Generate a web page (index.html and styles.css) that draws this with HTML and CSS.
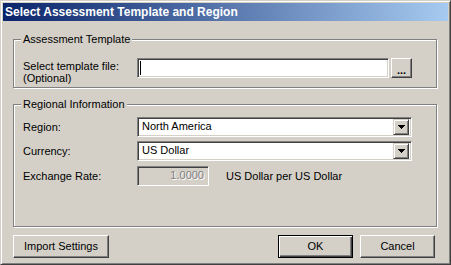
FILE: index.html
```html
<!DOCTYPE html>
<html>
<head>
<meta charset="utf-8">
<link rel="stylesheet" href="styles.css">
</head>
<body>
  <div class="window">
    <div class="titlebar">Select Assessment Template and Region</div>
    <div class="client">

      <div class="group group-template">
        <div class="group-title">Assessment Template</div>
        <div class="row row-file">
          <div class="label label-two">Select template file:<br>(Optional)</div>
          <div class="field field-file"><span class="caret"></span></div>
          <button class="btn btn-browse">...</button>
        </div>
      </div>

      <div class="group group-region">
        <div class="group-title">Regional Information</div>
        <div class="row row-region">
          <div class="label">Region:</div>
          <div class="field combo">
            <span class="combo-text">North America</span>
            <span class="combo-arrow"><svg width="7" height="4" viewBox="0 0 7 4"><path d="M0 0h7v1H0zM1 1h5v1H1zM2 2h3v1H2zM3 3h1v1H3z" fill="#000"/></svg></span>
          </div>
        </div>
        <div class="row row-currency">
          <div class="label">Currency:</div>
          <div class="field combo">
            <span class="combo-text">US Dollar</span>
            <span class="combo-arrow"><svg width="7" height="4" viewBox="0 0 7 4"><path d="M0 0h7v1H0zM1 1h5v1H1zM2 2h3v1H2zM3 3h1v1H3z" fill="#000"/></svg></span>
          </div>
        </div>
        <div class="row row-rate">
          <div class="label">Exchange Rate:</div>
          <div class="field field-rate">1.0000</div>
          <div class="rate-unit">US Dollar per US Dollar</div>
        </div>
      </div>

      <div class="footer">
        <button class="btn btn-import">Import Settings</button>
        <div class="footer-right">
          <button class="btn btn-default">OK</button>
          <button class="btn btn-cancel">Cancel</button>
        </div>
      </div>

    </div>
  </div>
</body>
</html>
```

FILE: styles.css
```css
html, body {
  margin: 0;
  padding: 0;
  background: #d4d0c8;
}

body {
  font-family: "Liberation Sans", Arial, sans-serif;
  font-size: 11px;
  line-height: 13px;
  color: #000;
}

/* window frame */
.window {
  width: 451px;
  height: 265px;
  box-sizing: border-box;
  border: 1px solid;
  border-color: #d4d0c8 #404040 #404040 #d4d0c8;
  box-shadow: inset 1px 1px 0 #fff, inset -1px -1px 0 #808080;
  padding: 2px;
  background: #d4d0c8;
}

.titlebar {
  height: 18px;
  line-height: 18px;
  padding-left: 2px;
  background: linear-gradient(to right, #0a246a, #a6caf0);
  color: #fff;
  font-weight: bold;
  font-size: 12px;
  white-space: nowrap;
}

.client {
  padding: 0 11px 0 10px;
}

/* group boxes */
.group {
  border: 1px solid #808080;
  box-shadow: 1px 1px 0 #fff, inset 1px 1px 0 #fff;
  padding: 0 24px 0 9px;
}

.group-template {
  margin-top: 18px;
  padding-bottom: 9px;
}

.group-region {
  margin-top: 16px;
  padding-bottom: 40px;
}

.group-title {
  width: fit-content;
  margin: -7px 0 0 -2px;
  padding: 0 2px;
  background: #d4d0c8;
  white-space: nowrap;
}

.row {
  display: flex;
  align-items: center;
}

.row-file {
  margin-top: 12px;
  height: 20px;
  align-items: flex-start;
}

.row-region { margin-top: 6px; }
.row-currency { margin-top: 4px; }
.row-rate { margin-top: 5px; }

.label {
  width: 114px;
  flex: none;
  white-space: nowrap;
}

.label-two {
  padding-top: 2px;
  line-height: 12px;
}

/* sunken fields */
.field {
  box-sizing: border-box;
  height: 20px;
  border: 1px solid;
  border-color: #808080 #fff #fff #808080;
  box-shadow: inset 1px 1px 0 #404040, inset -1px -1px 0 #d4d0c8;
  background: #fff;
  padding: 1px;
}

.field-file {
  flex: 1;
  padding-left: 2px;
  padding-top: 2px;
}

.caret {
  display: block;
  width: 1px;
  height: 14px;
  background: #000;
}

.combo {
  flex: 1;
  display: flex;
  align-items: center;
  padding: 2px 2px 2px 4px;
}

.combo-text {
  flex: 1;
  margin-top: -2px;
}

.combo-arrow {
  box-sizing: border-box;
  width: 16px;
  height: 16px;
  border: 1px solid;
  border-color: #d4d0c8 #404040 #404040 #d4d0c8;
  box-shadow: inset 1px 1px 0 #fff, inset -1px -1px 0 #808080;
  background: #d4d0c8;
  display: flex;
  align-items: center;
  justify-content: center;
}

.combo-arrow svg {
  display: block;
}

.field-rate {
  width: 72px;
  flex: none;
  background: #d4d0c8;
  color: #808080;
  text-shadow: 1px 1px 0 #fff;
  text-align: right;
  padding: 2px 4px 0 0;
}

.rate-unit {
  margin-left: 17px;
  white-space: nowrap;
}

/* buttons */
.btn {
  box-sizing: border-box;
  height: 23px;
  margin: 0;
  padding: 0;
  border: 1px solid;
  border-color: #fff #404040 #404040 #fff;
  box-shadow: inset -1px -1px 0 #808080;
  background: #d4d0c8;
  font-family: inherit;
  font-size: 11px;
  line-height: 13px;
  color: #000;
  border-radius: 0;
}

.btn-browse {
  width: 21px;
  height: 20px;
  margin-left: 2px;
  flex: none;
  font-weight: bold;
  line-height: 10px;
  padding-top: 4px;
}

.footer {
  margin-top: 8px;
  margin-right: 2px;
  display: flex;
  justify-content: space-between;
}

.btn-import {
  width: 96px;
}

.footer-right {
  display: flex;
  gap: 7px;
}

.btn-default,
.btn-cancel {
  width: 75px;
}

.btn-default {
  border-color: #000;
  box-shadow: inset 1px 1px 0 #fff, inset -1px -1px 0 #404040, inset -2px -2px 0 #808080;
}
```
